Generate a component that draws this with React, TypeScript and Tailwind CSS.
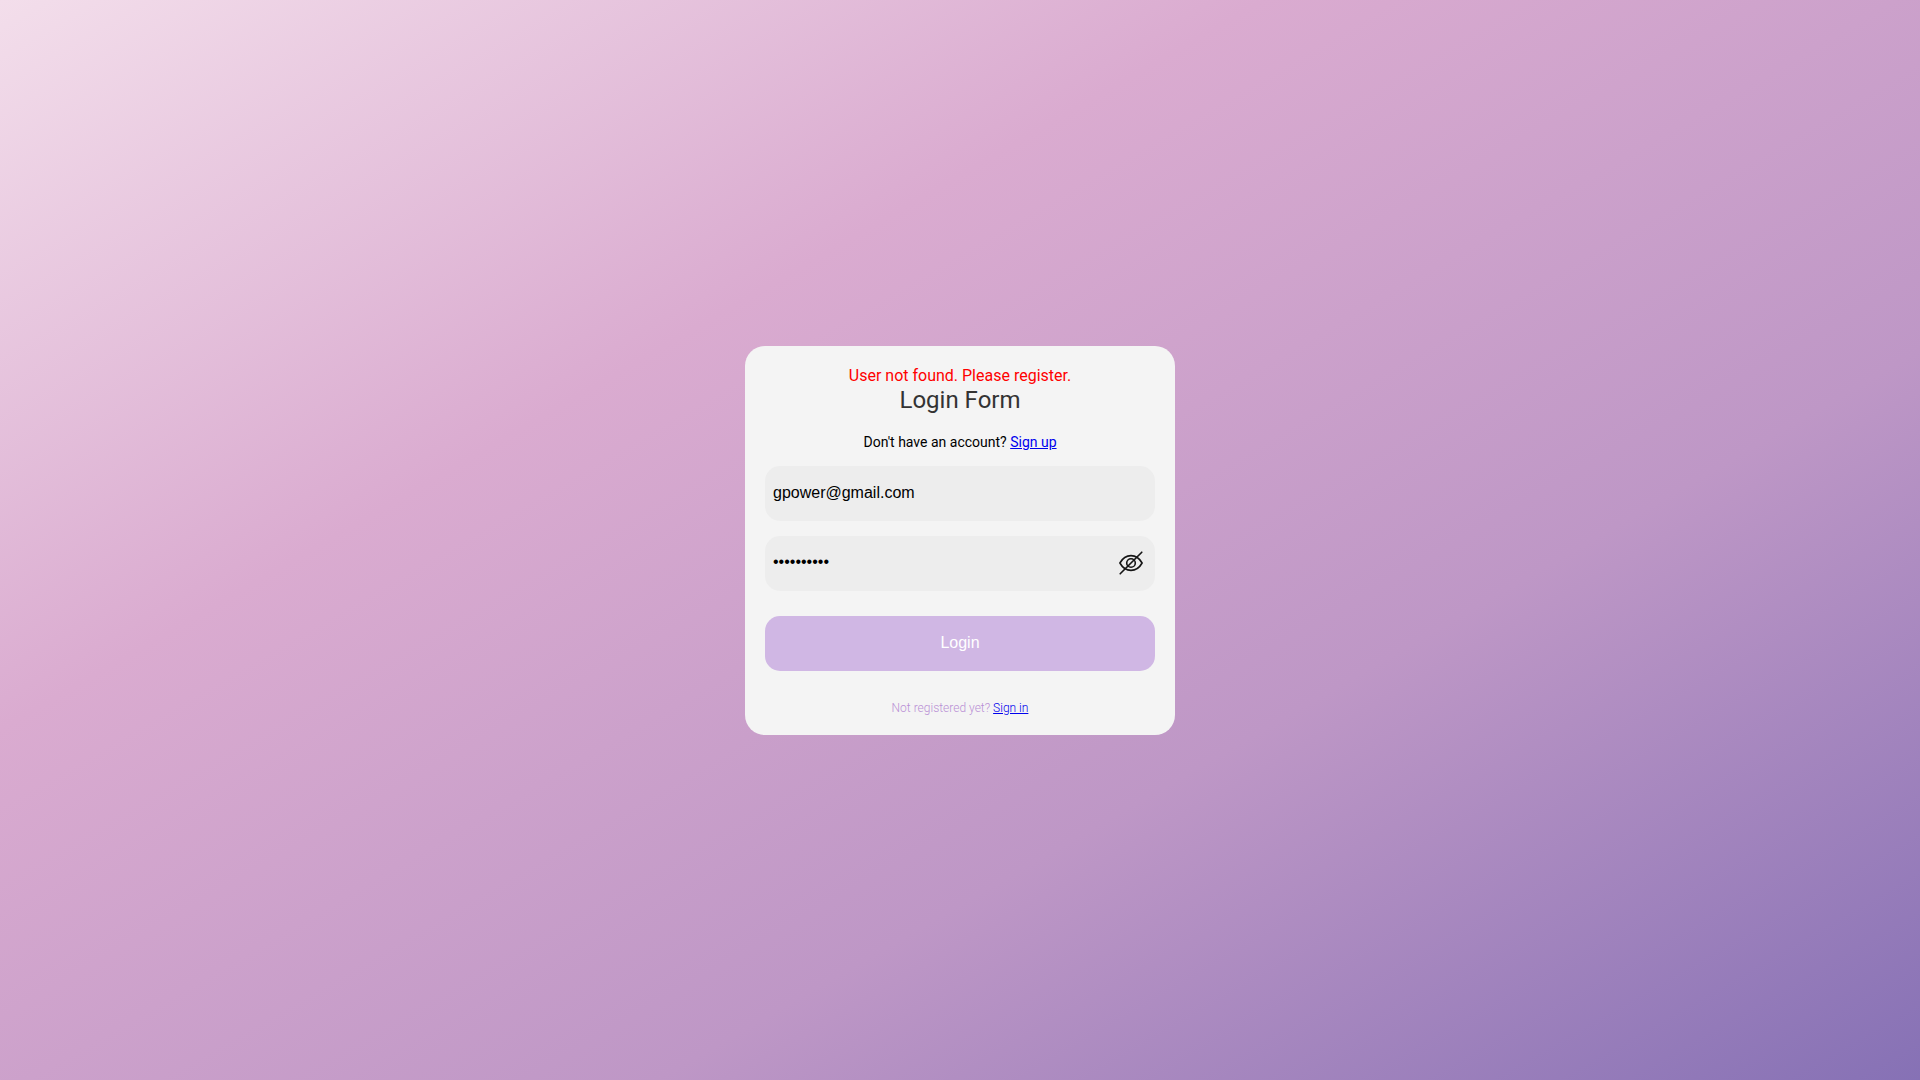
export default function App() {
  return (
    <main className="flex h-screen w-full items-center justify-center bg-[linear-gradient(150deg,#f3deeb_0%,#daabd0_33.33%,#be97c6_66.66%,#8671b5_100%)] font-[Roboto,sans-serif]">
      <form
        className="flex h-[389px] w-[430px] flex-col rounded-[20px] bg-[#f4f4f4] px-5 pt-5 text-center"
        onSubmit={(e) => e.preventDefault()}
      >
        <p className="h-5 text-base leading-[19px] text-[#ff0000]">User not found. Please register.</p>
        <h1 className="h-7 text-2xl leading-7 font-normal text-[#333]">Login Form</h1>
        <p className="mt-5 h-4 text-sm leading-4 text-black">
          Don't have an account?{" "}
          <a href="#signup" className="text-[#0000ee] underline">Sign up</a>
        </p>
        <input
          type="email"
          defaultValue="gpower@gmail.com"
          className="mt-4 h-[55px] w-full shrink-0 rounded-[15px] bg-[#ededed] px-2 font-['Liberation_Sans',sans-serif] text-base text-black outline-none"
        />
        <div className="mt-[15px] flex h-[55px] shrink-0 items-center rounded-[15px] bg-[#ededed] pr-[11px] pl-2">
          <input
            type="password"
            defaultValue="1234567890"
            className="h-full min-w-0 flex-1 bg-transparent pb-0.5 font-['Liberation_Sans',sans-serif] text-base text-black outline-none"
          />
          <svg viewBox="0 0 26 26" className="size-[26px]" fill="none" stroke="#151515" strokeWidth="1.6" strokeLinecap="round" strokeLinejoin="round">
            <path d="M1.9 13C7.4 3.2 18.6 3.2 24.1 13C18.6 22.8 7.4 22.8 1.9 13Z" />
            <circle cx="13" cy="13" r="4.3" />
            <path d="M2.2 23.8L23.8 2.2" />
          </svg>
        </div>
        <button className="mt-[25px] h-[55px] w-full shrink-0 rounded-[15px] bg-[#d0b7e4] font-['Liberation_Sans',sans-serif] text-base text-white">
          Login
        </button>
        <p className="mt-[30px] h-[14px] text-xs leading-[14px] font-light text-[#b98fd4]">
          Not registered yet?{" "}
          <a href="#signin" className="text-[#0000ee] underline">Sign in</a>
        </p>
      </form>
    </main>
  );
}
